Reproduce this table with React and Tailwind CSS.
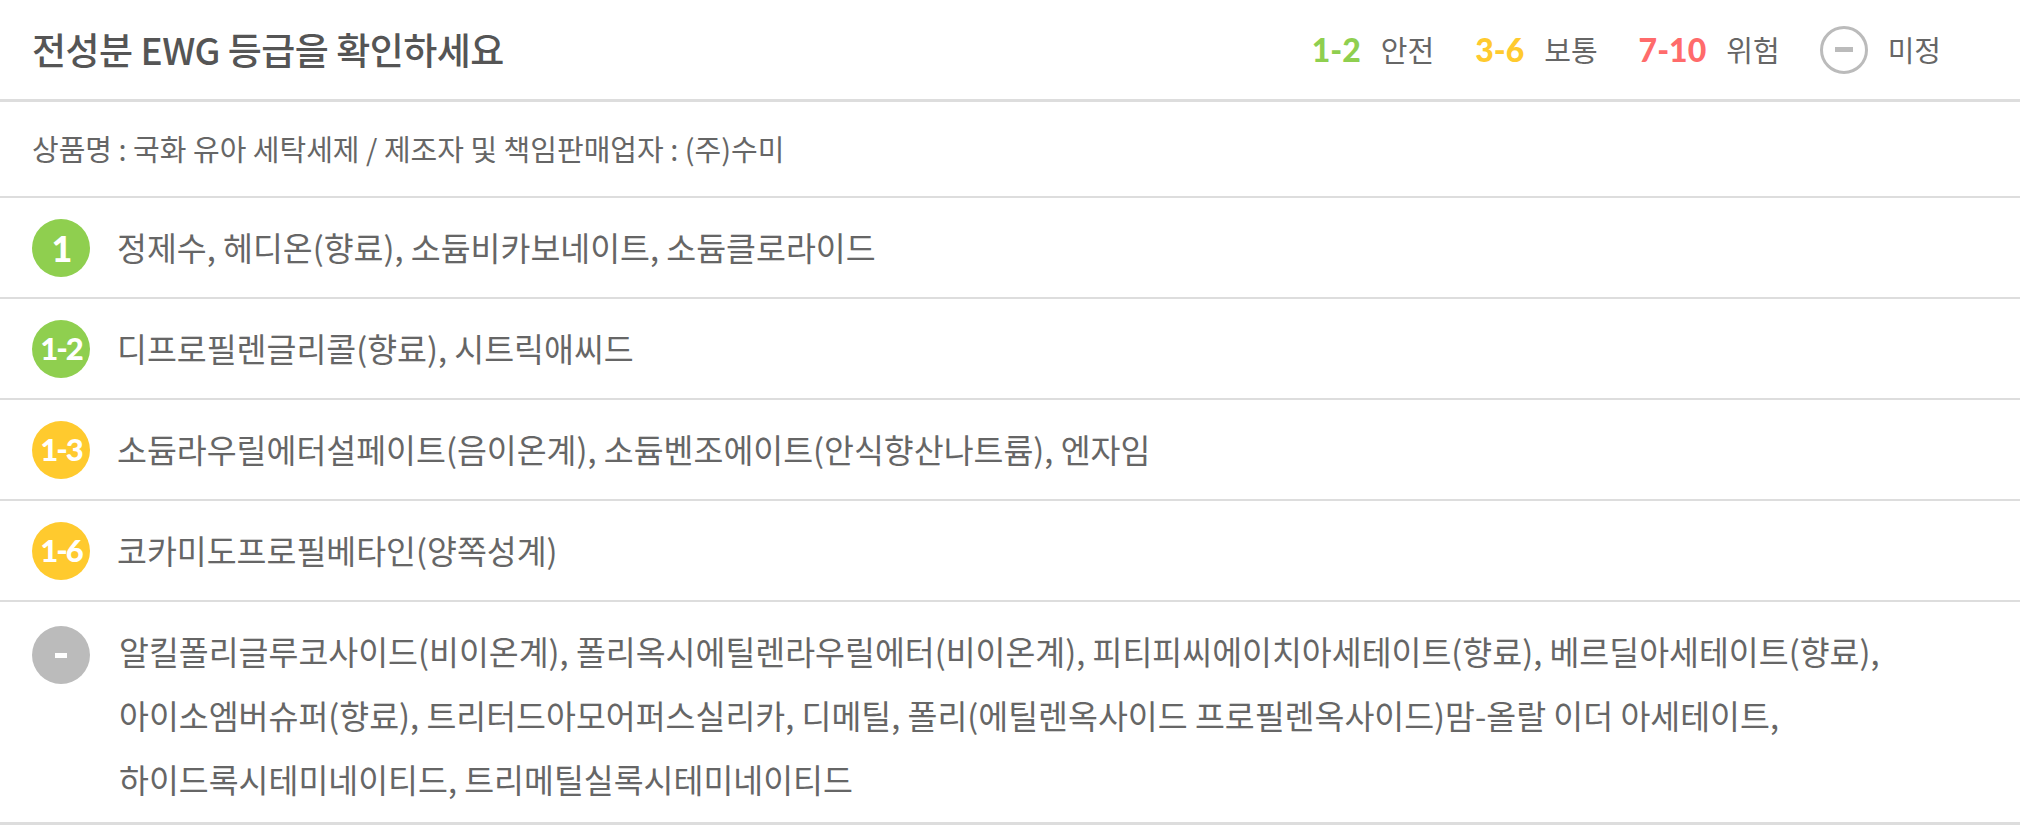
import React from "react";

const rows = [
  { grade: "1", size: "text-[36px]", color: "bg-[#8fcf4f]", text: "정제수, 헤디온(향료), 소듐비카보네이트, 소듐클로라이드" },
  { grade: "1-2", size: "text-[31px]", color: "bg-[#8fcf4f]", text: "디프로필렌글리콜(향료), 시트릭애씨드" },
  { grade: "1-3", size: "text-[31px]", color: "bg-[#ffca2e]", text: "소듐라우릴에터설페이트(음이온계), 소듐벤조에이트(안식향산나트륨), 엔자임" },
  { grade: "1-6", size: "text-[31px]", color: "bg-[#ffca2e]", text: "코카미도프로필베타인(양쪽성계)" },
];

const unknownLines = [
  "알킬폴리글루코사이드(비이온계), 폴리옥시에틸렌라우릴에터(비이온계), 피티피씨에이치아세테이트(향료), 베르딜아세테이트(향료),",
  "아이소엠버슈퍼(향료), 트리터드아모어퍼스실리카, 디메틸, 폴리(에틸렌옥사이드 프로필렌옥사이드)맘-올랄 이더 아세테이트,",
  "하이드록시테미네이티드, 트리메틸실록시테미네이티드",
];

const numFont = { fontFamily: "Lato, 'Open Sans', sans-serif" };

function Badge({ label, color, size }) {
  return (
    <div
      className={`w-[58px] h-[58px] shrink-0 rounded-full flex items-center justify-center text-white font-black tracking-[-2px] ${size} ${color}`}
      style={numFont}
    >
      {label}
    </div>
  );
}

export default function App() {
  return (
    <div
      className="w-[2020px] bg-white text-[#666]"
      style={{ fontFamily: "'Noto Sans CJK KR', 'Noto Sans', sans-serif" }}
    >
      <div className="h-[102px] flex items-center justify-between pl-[32px] pr-[79px] border-b-[3px] border-[#dddddd]">
        <h2 className="text-[37px] font-medium text-[#555] tracking-[-0.5px]">
          전성분 EWG 등급을 확인하세요
        </h2>
        <div className="flex items-center text-[29px]">
          <span className="text-[32px] font-black text-[#8fcf4f]" style={numFont}>1-2</span>
          <span className="ml-[20px] text-[#666]">안전</span>
          <span className="ml-[41px] text-[32px] font-black text-[#ffca2e]" style={numFont}>3-6</span>
          <span className="ml-[20px] text-[#666]">보통</span>
          <span className="ml-[41px] text-[32px] font-black text-[#ff6b6b]" style={numFont}>7-10</span>
          <span className="ml-[20px] text-[#666]">위험</span>
          <span className="ml-[40px] w-[48px] h-[48px] rounded-full border-[3px] border-[#bbbbbb] flex items-center justify-center">
            <span className="w-[18px] h-[5px] bg-[#bbbbbb]"></span>
          </span>
          <span className="ml-[20px] text-[#666]">미정</span>
        </div>
      </div>

      <div className="h-[96px] flex items-center px-[32px] border-b-2 border-[#dddddd] text-[29px] text-[#666]">
        상품명 : 국화 유아 세탁세제 / 제조자 및 책임판매업자 : (주)수미
      </div>

      {rows.map((row) => (
        <div
          key={row.grade}
          className="h-[101px] flex items-center pl-[32px] border-b-2 border-[#dddddd]"
        >
          <Badge label={row.grade} color={row.color} size={row.size} />
          <p className="ml-[27px] text-[32.5px] text-[#666]">{row.text}</p>
        </div>
      ))}

      <div className="flex items-start pl-[32px] pt-[21px] pb-[11px] border-b-[3px] border-[#dddddd]">
        <div className="pt-[3px]">
          <div className="w-[58px] h-[58px] shrink-0 rounded-full bg-[#bbbbbb] flex items-center justify-center">
            <span className="w-[12px] h-[5px] bg-white"></span>
          </div>
        </div>
        <p className="ml-[29px] -mt-[4px] text-[32.5px] leading-[64px] text-[#666]">
          {unknownLines.map((line) => (
            <span key={line} className="block">
              {line}
            </span>
          ))}
        </p>
      </div>
    </div>
  );
}
